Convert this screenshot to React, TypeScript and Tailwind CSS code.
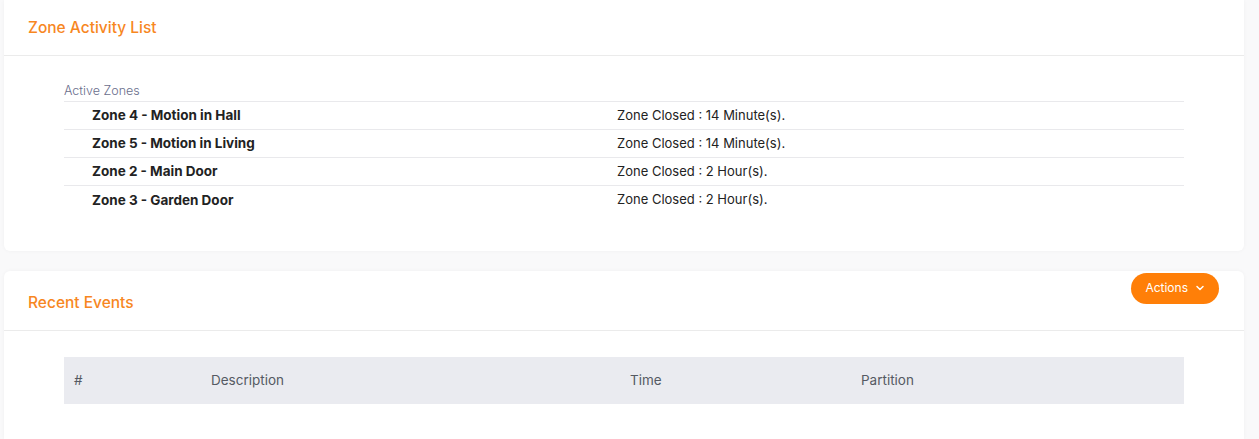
import { ChevronDown } from "lucide-react";

const zones = [
	{ name: "Zone 4 - Motion in Hall", status: "Zone Closed : 14 Minute(s)." },
	{ name: "Zone 5 - Motion in Living", status: "Zone Closed : 14 Minute(s)." },
	{ name: "Zone 2 - Main Door", status: "Zone Closed : 2 Hour(s)." },
	{ name: "Zone 3 - Garden Door", status: "Zone Closed : 2 Hour(s)." },
];

export default function App() {
	return (
		<div
			className="flex h-[439px] flex-col overflow-hidden bg-[#f9f9fa] pl-1 pr-[15px]"
			style={{ fontFamily: "Inter, 'Noto Sans', sans-serif" }}
		>
			<div className="rounded-b-md bg-white shadow-[0_0_4px_rgba(0,0,0,0.04)]">
				<div className="flex h-[56px] items-center border-b border-[#ebebeb] px-6">
					<h2 className="text-[15.5px] font-medium text-[#f7871f]">Zone Activity List</h2>
				</div>
				<div className="px-[60px] pt-[26px] pb-[37px]">
					<div className="border-b border-[#e9e9ec] pb-[2px] text-[12.5px] font-light leading-[17px] text-[#6a6e8c]">
						Active Zones
					</div>
					{zones.map((z, i) => (
						<div
							key={z.name}
							className={`flex h-[28px] items-center text-[13px] text-[#222] ${i < zones.length - 1 ? "border-b border-[#e9e9ec]" : ""}`}
						>
							<div className="w-[553px] pl-7 text-[13.5px] font-bold">{z.name}</div>
							<div>{z.status}</div>
						</div>
					))}
				</div>
			</div>

			<div className="mt-5 flex-1 rounded-t-md bg-white shadow-[0_0_4px_rgba(0,0,0,0.04)]">
				<div className="flex h-[60px] items-center justify-between border-b border-[#ebebeb] pl-6 pr-[25px]">
					<h2 className="pt-1 text-[15.5px] font-medium text-[#f7871f]">Recent Events</h2>
					<button className="mb-[25px] flex h-[31px] items-center gap-1.5 rounded-full bg-[#ff7f08] pl-[14px] pr-[13px] text-[12px] text-white">
						Actions
						<ChevronDown className="h-3 w-3" strokeWidth={3} />
					</button>
				</div>
				<div className="px-[60px] pt-[26px]">
					<div className="flex h-[47px] items-center bg-[#eaebf0] text-[13.5px] text-[#555a63]">
						<div className="w-[147px] pl-[10px]">#</div>
						<div className="w-[419px]">Description</div>
						<div className="w-[231px]">Time</div>
						<div>Partition</div>
					</div>
				</div>
			</div>
		</div>
	);
}
